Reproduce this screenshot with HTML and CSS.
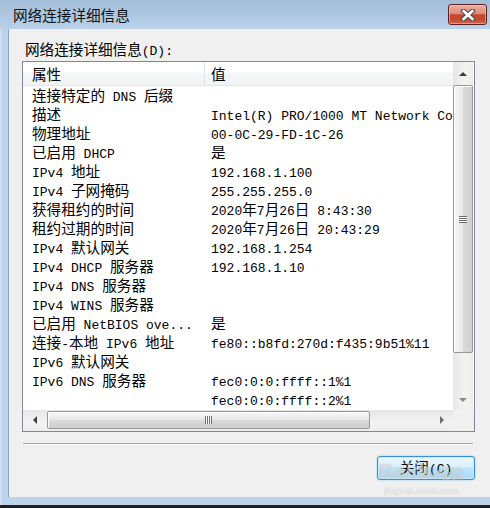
FILE: index.html
```html
<!DOCTYPE html>
<html lang="zh-CN">
<head>
  <meta charset="UTF-8">
  <meta name="viewport" content="width=device-width, initial-scale=1.0">
  <title>网络连接详细信息</title>
  <link rel="stylesheet" href="styles.css">
</head>
<body>
<div class="window">
  <div class="titlebar">
    <span class="title">网络连接详细信息</span>
    <div class="close">
      <svg width="16" height="12" viewBox="0 0 16 12">
        <path d="M3.5 2 L12.5 10 M12.5 2 L3.5 10" stroke="#4b4b4b" stroke-width="5" stroke-linecap="round"/>
        <path d="M3.5 2 L12.5 10 M12.5 2 L3.5 10" stroke="#fff" stroke-width="2.8" stroke-linecap="round"/>
      </svg>
    </div>
  </div>

  <div class="client">
    <div class="caption"><span class="cn">网络连接详细信息</span>(D):</div>

    <div class="listbox">
      <div class="lv">
        <div class="lv-head">
          <div class="k">属性</div>
          <div class="v">值</div>
        </div>
        <div class="lv-body">
          <div class="row"><div class="k"><span class="cn">连接特定的</span> DNS <span class="cn">后缀</span></div><div class="v"></div></div>
          <div class="row"><div class="k"><span class="cn">描述</span></div><div class="v">Intel(R) PRO/1000 MT Network Connection</div></div>
          <div class="row"><div class="k"><span class="cn">物理地址</span></div><div class="v">00-0C-29-FD-1C-26</div></div>
          <div class="row"><div class="k"><span class="cn">已启用</span> DHCP</div><div class="v"><span class="cn">是</span></div></div>
          <div class="row"><div class="k">IPv4 <span class="cn">地址</span></div><div class="v">192.168.1.100</div></div>
          <div class="row"><div class="k">IPv4 <span class="cn">子网掩码</span></div><div class="v">255.255.255.0</div></div>
          <div class="row"><div class="k"><span class="cn">获得租约的时间</span></div><div class="v">2020<span class="cn">年</span>7<span class="cn">月</span>26<span class="cn">日</span> 8:43:30</div></div>
          <div class="row"><div class="k"><span class="cn">租约过期的时间</span></div><div class="v">2020<span class="cn">年</span>7<span class="cn">月</span>26<span class="cn">日</span> 20:43:29</div></div>
          <div class="row"><div class="k">IPv4 <span class="cn">默认网关</span></div><div class="v">192.168.1.254</div></div>
          <div class="row"><div class="k">IPv4 DHCP <span class="cn">服务器</span></div><div class="v">192.168.1.10</div></div>
          <div class="row"><div class="k">IPv4 DNS <span class="cn">服务器</span></div><div class="v"></div></div>
          <div class="row"><div class="k">IPv4 WINS <span class="cn">服务器</span></div><div class="v"></div></div>
          <div class="row"><div class="k"><span class="cn">已启用</span> NetBIOS ove...</div><div class="v"><span class="cn">是</span></div></div>
          <div class="row"><div class="k"><span class="cn">连接</span>-<span class="cn">本地</span> IPv6 <span class="cn">地址</span></div><div class="v">fe80::b8fd:270d:f435:9b51%11</div></div>
          <div class="row"><div class="k">IPv6 <span class="cn">默认网关</span></div><div class="v"></div></div>
          <div class="row"><div class="k">IPv6 DNS <span class="cn">服务器</span></div><div class="v">fec0:0:0:ffff::1%1</div></div>
          <div class="row"><div class="k"></div><div class="v">fec0:0:0:ffff::2%1</div></div>
        </div>
      </div>

      <div class="vscroll">
        <div class="arrow"><span class="tri up"></span></div>
        <div class="thumb"><span class="grip"></span></div>
        <div class="track"></div>
        <div class="arrow down-box"><span class="tri down"></span></div>
      </div>

      <div class="hscroll">
        <div class="harrow left-box"><span class="tri left"></span></div>
        <div class="hthumb"><span class="hgrip"></span></div>
        <div class="htrack"></div>
        <div class="harrow right-box"><span class="tri right"></span></div>
      </div>
      <div class="corner"></div>
    </div>

    <div class="sep"></div>

    <div class="actions">
      <button class="btn"><span class="cn">关闭</span>(C)</button>
    </div>

    <div class="watermark">
      <div class="wm-logo">Baidu<span class="wm-cn">经验</span></div>
      <div class="wm-url">jingyan.baidu.com</div>
    </div>
  </div>
</div>
</body>
</html>
```

FILE: styles.css
```css
body {
  margin: 0;
  width: 490px;
  height: 508px;
  overflow: hidden;
  font-family: "Liberation Mono", "Noto Sans CJK SC", monospace;
  font-size: 13px;
  color: #000;
}
.cn {
  font-family: "Noto Sans CJK SC", sans-serif;
  font-size: 14.6px;
}

/* window frame */
.window {
  height: 508px;
  box-sizing: border-box;
  display: flex;
  flex-direction: column;
  background: linear-gradient(to right, #dbe8f5 0, #bcd3eb 2px, #bcd3eb 100%);
  border-bottom: 3px solid #1e1e1e;
}
.titlebar {
  height: 29px;
  flex: none;
  display: flex;
  align-items: center;
  justify-content: space-between;
  padding: 0 3px 0 13px;
  background: linear-gradient(#a3bed9, #b9d1e9);
}
.title {
  font-family: "Noto Sans CJK SC", sans-serif;
  font-size: 14.6px;
  color: #111;
}
.close {
  align-self: flex-start;
  margin-top: 4px;
  width: 39px;
  height: 21px;
  box-sizing: border-box;
  border: 1px solid #5c1f22;
  border-radius: 3px;
  background: linear-gradient(#eab0a2 0, #dd8b78 45%, #c4462f 52%, #c54b33 80%, #d26a4c 100%);
  box-shadow: inset 0 0 0 1px rgba(255, 220, 210, 0.45);
  display: flex;
  align-items: center;
  justify-content: center;
}

.client {
  flex: 1;
  position: relative;
  margin: 0 0 8px 8px;
  border-left: 1px solid #8ca2ba;
  background: #f0f0f0;
}
.caption {
  padding: 12px 0 0 16px;
  line-height: 16px;
  height: 16px;
}

/* list view box */
.listbox {
  margin: 4px 0 0 13px;
  width: 453px;
  height: 371px;
  box-sizing: border-box;
  border: 1px solid #828790;
  background: #fff;
  display: grid;
  grid-template-columns: 430px 21px;
  grid-template-rows: 348px 21px;
}
.lv {
  overflow: hidden;
}
.lv-head {
  height: 23px;
  border-bottom: 1px solid #e5e5e5;
  display: grid;
  grid-template-columns: 182px 1fr;
  line-height: 23px;
  font-family: "Noto Sans CJK SC", sans-serif;
  font-size: 14.6px;
  background: linear-gradient(#fff 0, #fff 45%, #f5f6f7 46%, #f2f3f5 100%);
}
.lv-head .k {
  border-right: 1px solid #e0e2e5;
}
.row {
  height: 19px;
  box-sizing: border-box;
  padding-top: 4px;
  line-height: 15px;
  display: grid;
  grid-template-columns: 182px 1fr;
  white-space: nowrap;
}
.row .cn {
  line-height: 0;
}
.k {
  padding-left: 9px;
}
.v {
  padding-left: 6px;
}

/* scrollbars */
.vscroll {
  display: flex;
  flex-direction: column;
  background: linear-gradient(to right, #e6e6e6, #f3f3f3 60%, #ededed);
  border-right: 1px solid #fbfbfb;
}
.arrow {
  height: 23px;
  display: flex;
  align-items: center;
  justify-content: center;
}
.down-box {
  height: 21px;
}
.thumb {
  height: 268px;
  width: 20px;
  box-sizing: border-box;
  border: 1px solid #979797;
  border-radius: 2px;
  background: linear-gradient(to right, #f7f7f7, #e9e9e9 45%, #d9d9d9 55%, #cfcfcf);
  box-shadow: inset 1px 1px 0 #fff;
  display: flex;
  align-items: center;
  justify-content: center;
}
.grip {
  width: 8px;
  height: 7px;
  background: repeating-linear-gradient(#6d6d6d 0, #6d6d6d 1px, #fdfdfd 1px, #fdfdfd 2px);
}
.track {
  flex: 1;
}
.tri {
  width: 0;
  height: 0;
  border: 4px solid transparent;
}
.tri.up {
  border-top: 0;
  border-bottom-color: #3c3c3c;
}
.tri.down {
  border-bottom: 0;
  border-top-color: #8a8a8a;
}
.tri.left {
  border-left: 0;
  border-right-color: #3c3c3c;
}
.tri.right {
  border-right: 0;
  border-left-color: #6e6e6e;
}
.hscroll {
  display: flex;
  align-items: stretch;
  background: linear-gradient(#e6e6e6, #f3f3f3 60%, #ededed);
  padding: 1px 0 2px;
}
.harrow {
  display: flex;
  align-items: center;
  justify-content: center;
}
.left-box {
  width: 24px;
}
.right-box {
  width: 22px;
}
.hthumb {
  width: 323px;
  box-sizing: border-box;
  border: 1px solid #979797;
  border-radius: 2px;
  background: linear-gradient(#f7f7f7, #e9e9e9 45%, #d9d9d9 55%, #cfcfcf);
  box-shadow: inset 1px 1px 0 #fff;
  display: flex;
  align-items: center;
  justify-content: center;
}
.hgrip {
  width: 7px;
  height: 8px;
  background: repeating-linear-gradient(to right, #6d6d6d 0, #6d6d6d 1px, #fdfdfd 1px, #fdfdfd 2px);
}
.htrack {
  flex: 1;
}
.corner {
  background: #f0f0f0;
}

.sep {
  margin: 11px 0 0 14px;
  width: 450px;
  height: 1px;
  background: #a0a0a0;
  border-bottom: 1px solid #fff;
}
.actions {
  display: flex;
  justify-content: flex-end;
  padding: 11px 15px 0 0;
}
.btn {
  width: 98px;
  height: 24px;
  padding: 0;
  border: 1px solid #3c8fd0;
  border-radius: 3px;
  background: linear-gradient(#eaf6fd 0, #d9f0fc 45%, #bee6fd 50%, #a7d9f5 100%);
  box-shadow: inset 0 0 0 1px #c6ecfc, 0 0 2px #7fc4f0;
  font-family: "Liberation Mono", "Noto Sans CJK SC", monospace;
  font-size: 13px;
  line-height: 20px;
  color: #000;
}

/* watermark lying over the button */
.watermark {
  position: absolute;
  left: 366px;
  top: 430px;
  width: 92px;
  text-align: center;
  pointer-events: none;
}
.wm-logo {
  font-family: "Liberation Sans", sans-serif;
  font-weight: bold;
  font-size: 21px;
  line-height: 24px;
  white-space: nowrap;
  color: rgba(255, 255, 255, 0.5);
  text-shadow: 0 0 1px rgba(90, 90, 90, 0.4);
}
.wm-cn {
  font-family: "Noto Sans CJK SC", sans-serif;
  font-size: 13px;
}
.wm-url {
  font-family: "Liberation Serif", serif;
  font-size: 10px;
  line-height: 12px;
  color: rgba(255, 255, 255, 0.6);
  text-shadow: 0 0 1px rgba(90, 90, 90, 0.35);
}
```
